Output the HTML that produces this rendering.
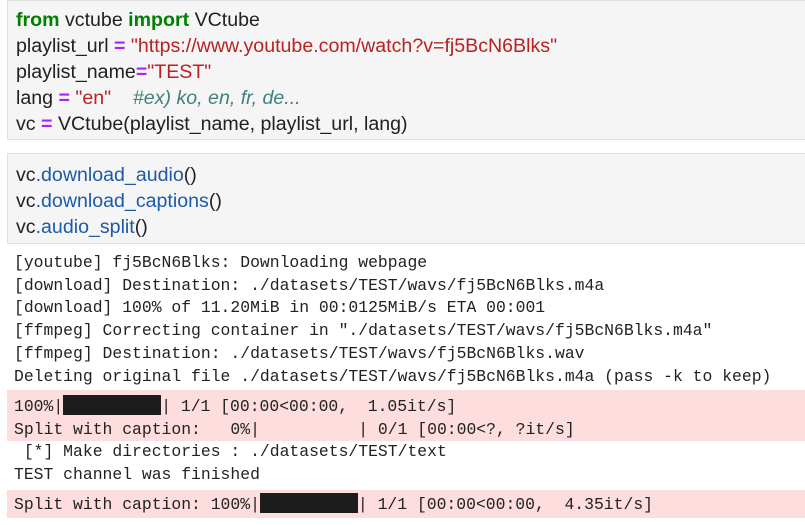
<!DOCTYPE html>
<html><head><style>
body{margin:0;background:#fff;width:805px;height:525px;overflow:hidden;position:relative}
.cell{position:absolute;left:7px;width:805px;background:#f5f5f5;border:1px solid #e0e0e0;box-sizing:border-box}
.code{font-family:"Liberation Sans","Noto Sans CJK KR",sans-serif;font-size:19.6px;color:#212121;position:absolute;left:16px;white-space:pre;line-height:26px}
.k{color:#008000;font-weight:bold}.o{color:#aa22ff;font-weight:bold}.s{color:#ba2121}.c{color:#408080;font-style:italic}.f{color:#1d5aa8}
.out{position:absolute;left:14px;font-family:"Liberation Mono",monospace;font-size:16.4px;white-space:pre;color:#222;line-height:22.7px}
.pink{position:absolute;left:7px;width:798px;background:#fddddd}
.b{display:inline-block;width:98px;height:20px;vertical-align:-4px;background:#1c1c1c}
</style></head><body>
<div class="cell" style="top:0;height:140px"></div>
<div class="code" style="top:7px"><span class="k">from</span> vctube <span class="k">import</span> VCtube
playlist_url <span class="o">=</span> <span class="s">"https://www.youtube.com/watch?v=fj5BcN6Blks"</span>
playlist_name<span class="o">=</span><span class="s">"TEST"</span>
lang <span class="o">=</span> <span class="s">"en"</span>    <span class="c">#ex) ko, en, fr, de...</span>
vc <span class="o">=</span> VCtube(playlist_name, playlist_url, lang)</div>
<div class="cell" style="top:153px;height:91px"></div>
<div class="code" style="top:162px">vc<span class="f">.download_audio</span>()
vc<span class="f">.download_captions</span>()
vc<span class="f">.audio_split</span>()</div>
<div class="out" style="top:252px">[youtube] fj5BcN6Blks: Downloading webpage
[download] Destination: ./datasets/TEST/wavs/fj5BcN6Blks.m4a
[download] 100% of 11.20MiB in 00:0125MiB/s ETA 00:001
[ffmpeg] Correcting container in "./datasets/TEST/wavs/fj5BcN6Blks.m4a"
[ffmpeg] Destination: ./datasets/TEST/wavs/fj5BcN6Blks.wav
Deleting original file ./datasets/TEST/wavs/fj5BcN6Blks.m4a (pass -k to keep)</div>
<div class="pink" style="top:390px;height:51px"></div>
<div class="out" style="top:395px">100%|<span class="b"></span>| 1/1 [00:00&lt;00:00,  1.05it/s]
Split with caption:   0%|          | 0/1 [00:00&lt;?, ?it/s]</div>
<div class="out" style="top:441px"> [*] Make directories : ./datasets/TEST/text
TEST channel was finished</div>
<div class="pink" style="top:490px;height:28px"></div>
<div class="out" style="top:493px">Split with caption: 100%|<span class="b"></span>| 1/1 [00:00&lt;00:00,  4.35it/s]</div>
</body></html>
